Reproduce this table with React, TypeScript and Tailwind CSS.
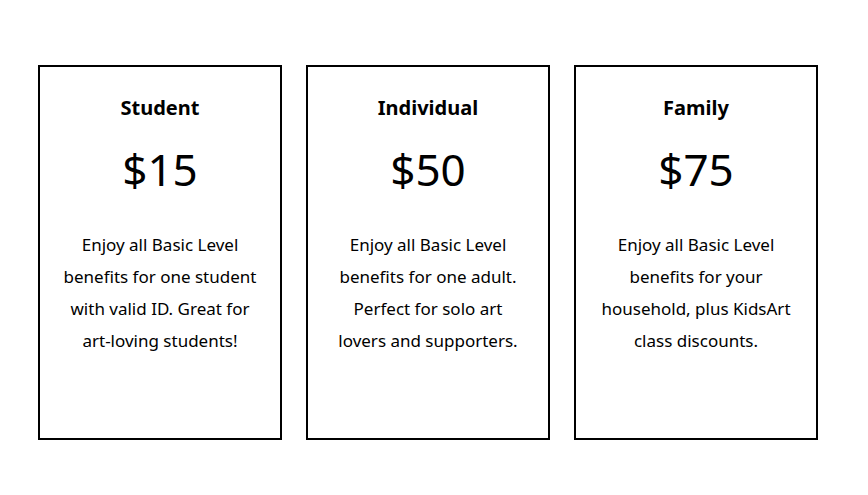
const plans = [
  {
    name: 'Student',
    price: '$15',
    text: 'Enjoy all Basic Level benefits for one student with valid ID. Great for art-loving students!'
  },
  {
    name: 'Individual',
    price: '$50',
    text: 'Enjoy all Basic Level benefits for one adult. Perfect for solo art lovers and supporters.'
  },
  {
    name: 'Family',
    price: '$75',
    text: 'Enjoy all Basic Level benefits for your household, plus KidsArt class discounts.'
  }
]

export default function App() {
  return (
    <div className="min-h-screen bg-white font-['Noto_Sans',sans-serif] text-black">
      <div className="flex gap-6 pl-[38px] pt-[65px]">
        {plans.map((plan) => (
          <div
            key={plan.name}
            className="flex h-[375px] w-[244px] flex-col items-center border-2 border-black px-[22px] pt-[27px] text-center"
          >
            <h3 className="text-[20px] font-bold leading-[28px]">{plan.name}</h3>
            <p className="mt-[14px] text-[44px] leading-[66px]">{plan.price}</p>
            <p className="mt-[27px] text-[17px] leading-[32px]">{plan.text}</p>
          </div>
        ))}
      </div>
    </div>
  )
}
